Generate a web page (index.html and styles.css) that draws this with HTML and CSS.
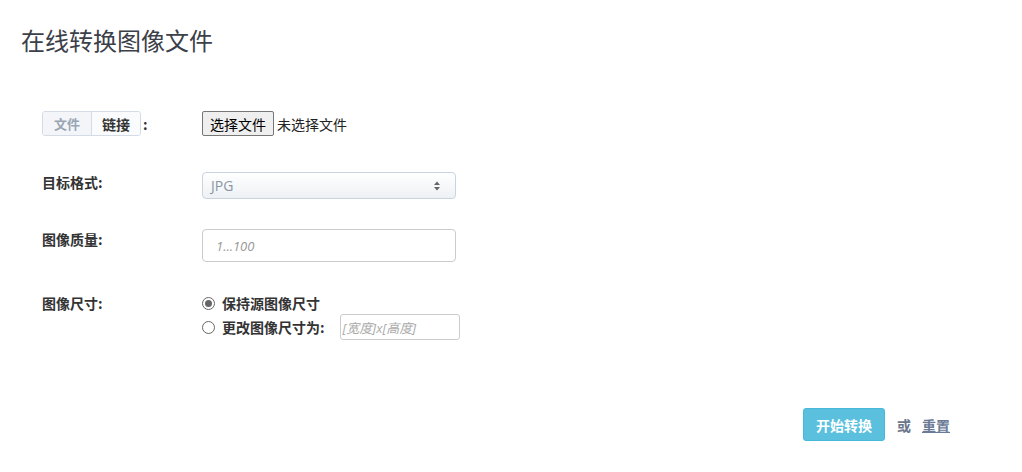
FILE: index.html
```html
<!DOCTYPE html>
<html lang="zh-CN">
<head>
<meta charset="utf-8">
<title>在线转换图像文件</title>
<link rel="stylesheet" href="styles.css">
</head>
<body>
<div class="page">
  <h1 class="title">在线转换图像文件</h1>
  <form class="form">
    <div class="row row-file">
      <div class="label">
        <span class="tabs"><span class="tab tab-active">文件</span><span class="tab tab-link">链接</span></span><span class="colon">:</span>
      </div>
      <div class="control file-control">
        <span class="file-btn">选择文件</span><span class="file-name">未选择文件</span>
      </div>
    </div>
    <div class="row row-format">
      <div class="label">目标格式:</div>
      <div class="control">
        <div class="select"><span class="select-value">JPG</span>
          <svg class="select-arrows" width="8" height="12" viewBox="0 0 8 12"><path d="M4 1.5 L7 5 H1 Z" fill="#666"/><path d="M4 10.5 L7 7 H1 Z" fill="#666"/></svg>
        </div>
      </div>
    </div>
    <div class="row row-quality">
      <div class="label">图像质量:</div>
      <div class="control">
        <div class="text-input"><span class="placeholder">1...100</span></div>
      </div>
    </div>
    <div class="row row-size">
      <div class="label label-size">图像尺寸:</div>
      <div class="control radios">
        <div class="radio-line"><span class="radio checked"></span><span class="radio-text">保持源图像尺寸</span></div>
        <div class="radio-line"><span class="radio"></span><span class="radio-text">更改图像尺寸为:</span><span class="size-input"><span class="placeholder">[宽度]x[高度]</span></span></div>
      </div>
    </div>
    <div class="actions">
      <span class="btn-start">开始转换</span>
      <span class="or">或</span>
      <span class="reset">重置</span>
    </div>
  </form>
</div>
</body>
</html>
```
FILE: styles.css
```css
* { box-sizing: border-box; }
html, body { margin: 0; padding: 0; background: #fff; }
body {
  font-family: "Open Sans", "Noto Sans CJK SC", sans-serif;
  color: #333;
  font-size: 14px;
}
.page { padding: 23px 0 0 21px; width: 1022px; }
.title {
  margin: 0;
  font-weight: 400;
  font-size: 24px;
  line-height: 34px;
  color: #3b4049;
  font-family: "Noto Sans CJK SC", sans-serif;
}
.form { padding: 54px 0 0 21px; }
.row { display: flex; align-items: flex-start; }
.label {
  width: 160px;
  font-weight: 700;
  font-size: 14px;
  color: #333;
  font-family: "Noto Sans CJK SC", sans-serif;
}
.row-file { height: 25px; }
.row-file .label { display: flex; align-items: center; }
.tabs {
  display: inline-flex;
  border: 1px solid #d3dce6;
  border-radius: 3px;
  height: 25px;
  overflow: hidden;
}
.tab {
  display: flex; align-items: center; justify-content: center;
  font-size: 13px; font-weight: 700;
  height: 23px;
}
.tab-active { background: #f3f5f8; color: #9aa5b3; border-right: 1px solid #d3dce6; width: 49px; }
.tab-link { background: #fafbfc; color: #333; width: 48px; font-size: 14px; }
.colon { margin-left: 2px; font-weight: 700; }
.file-control { display: flex; align-items: center; height: 25px; }
.file-btn {
  display: inline-flex; align-items: center; justify-content: center;
  width: 72px; height: 25px;
  border: 1px solid #767676;
  border-radius: 2px;
  background: #efefef;
  color: #000;
  font-size: 14px;
  font-family: "Noto Sans CJK SC", sans-serif;
}
.file-name { margin-left: 3px; font-size: 14px; color: #222; font-family: "Noto Sans CJK SC", sans-serif; }

.row-format { margin-top: 36px; }
.row-format .label { line-height: 20px; padding-top: 0; }
.select {
  width: 254px; height: 27px;
  border: 1px solid #c8d4e0;
  border-radius: 4px;
  background: linear-gradient(#ffffff, #eef1f4);
  display: flex; align-items: center; justify-content: space-between;
  padding: 0 14px 0 8px;
}
.select-value { color: #8a96a3; font-size: 14px; }

.row-quality { margin-top: 30px; }
.row-quality .label { line-height: 20px; padding-top: 0; }
.text-input {
  width: 254px; height: 33px;
  border: 1px solid #ccc;
  border-radius: 4px;
  display: flex; align-items: center;
  padding-left: 13px;
}
.placeholder { color: #999; font-style: italic; font-size: 13px; }

.row-size { margin-top: 31px; }
.label-size { line-height: 20px; padding-top: 0; }
.radios { display: flex; flex-direction: column; }
.radio-line { display: flex; align-items: center; height: 26px; }
.radio-line:first-child { height: 20px; margin-bottom: 1px; }
.radio {
  width: 13px; height: 13px;
  border: 1px solid #666;
  border-radius: 50%;
  margin-right: 7px;
  position: relative;
  background: #fff;
}
.radio.checked::after {
  content: "";
  position: absolute; left: 2px; top: 2px;
  width: 7px; height: 7px; border-radius: 50%;
  background: #666;
}
.radio-text { font-weight: 700; color: #333; font-family: "Noto Sans CJK SC", sans-serif; font-size: 14px; }
.size-input {
  margin-left: 15px;
  width: 120px; height: 26px;
  border: 1px solid #ccc;
  border-radius: 3px;
  display: flex; align-items: center;
  padding-left: 2px;
}
.size-input .placeholder { color: #aaa; font-size: 13px; }

.actions {
  margin-top: 68px;
  display: flex; align-items: center;
  padding-left: 761px;
}
.btn-start {
  display: inline-flex; align-items: center; justify-content: center;
  width: 82px; height: 33px;
  background: #5bc0de;
  border: 1px solid #46b8da;
  border-radius: 3px;
  color: #fff;
  font-weight: 700;
  font-size: 14px;
  font-family: "Noto Sans CJK SC", sans-serif;
}
.or { margin-left: 12px; font-weight: 700; color: #6b778a; font-family: "Noto Sans CJK SC", sans-serif; }
.reset { margin-left: 11px; font-weight: 700; color: #6b7a96; text-decoration: underline; font-family: "Noto Sans CJK SC", sans-serif; }
```
